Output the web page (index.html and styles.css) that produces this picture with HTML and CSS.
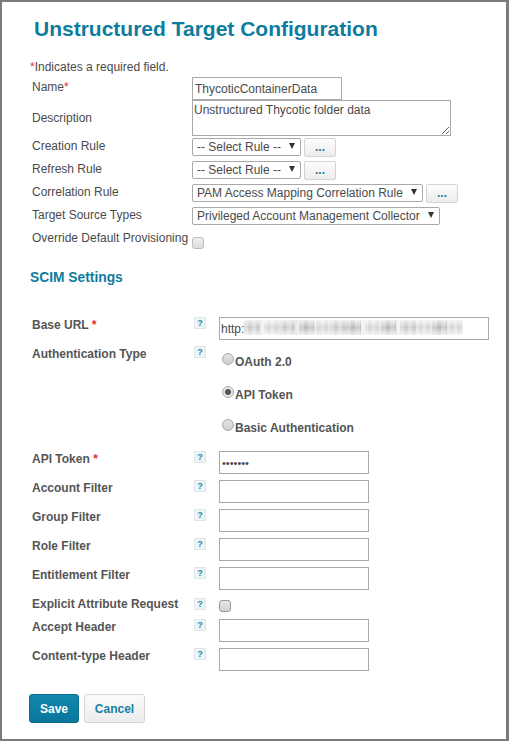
FILE: index.html
```html
<!DOCTYPE html>
<html lang="en">
<head>
  <meta charset="UTF-8" />
  <title>Unstructured Target Configuration</title>
  <link rel="stylesheet" href="styles.css">
</head>
<body>
  <div class="frame">
    <h1>Unstructured Target Configuration</h1>
    <p class="note"><span class="req">*</span>Indicates a required field.</p>

    <div class="row name-row">
      <label class="lbl" for="name">Name<span class="req">*</span></label>
      <input class="text name-input" id="name" type="text" value="ThycoticContainerData" />
    </div>
    <div class="row desc-row">
      <label class="lbl" for="desc">Description</label>
      <textarea class="desc" id="desc">Unstructured Thycotic folder data</textarea>
    </div>
    <div class="row">
      <label class="lbl">Creation Rule</label>
      <span class="select-box w-rule"><select><option>-- Select Rule --</option></select></span>
      <button class="more">...</button>
    </div>
    <div class="row">
      <label class="lbl">Refresh Rule</label>
      <span class="select-box w-rule"><select><option>-- Select Rule --</option></select></span>
      <button class="more">...</button>
    </div>
    <div class="row">
      <label class="lbl">Correlation Rule</label>
      <span class="select-box w-corr"><select><option>PAM Access Mapping Correlation Rule</option></select></span>
      <button class="more more-wide">...</button>
    </div>
    <div class="row">
      <label class="lbl">Target Source Types</label>
      <span class="select-box w-type"><select><option>Privileged Account Management Collector</option></select></span>
    </div>
    <div class="row">
      <label class="lbl">Override Default Provisioning</label>
      <input class="check check-top" type="checkbox" disabled />
    </div>

    <h2>SCIM Settings</h2>

    <div class="scim">
      <div class="s-row">
        <label class="s-lbl">Base URL <span class="req">*</span></label>
        <span class="help">?</span>
        <div class="url-wrap">
          <input class="text url" type="text" value="http:" />
          <div class="smudge">
            <i class="s1"></i><i class="gap"></i><i class="s2"></i><i class="s1"></i><i class="gap"></i><i class="s3"></i><i class="s2"></i><i class="s1"></i><i class="s3"></i><i class="gap"></i><i class="s2"></i><i class="s3"></i><i class="gap"></i><i class="s1"></i><i class="s2"></i><i class="s3"></i><i class="s2"></i>
          </div>
        </div>
      </div>
      <div class="s-row auth-row">
        <label class="s-lbl">Authentication Type</label>
        <span class="help">?</span>
        <div class="radios">
          <label class="radio"><input type="radio" name="auth" />OAuth 2.0</label>
          <label class="radio"><input type="radio" name="auth" checked />API Token</label>
          <label class="radio"><input type="radio" name="auth" />Basic Authentication</label>
        </div>
      </div>
      <div class="s-row">
        <label class="s-lbl">API Token <span class="req">*</span></label>
        <span class="help">?</span>
        <input class="text field token" type="password" value="1234567" />
      </div>
      <div class="s-row">
        <label class="s-lbl">Account Filter</label>
        <span class="help">?</span>
        <input class="text field" type="text" />
      </div>
      <div class="s-row">
        <label class="s-lbl">Group Filter</label>
        <span class="help">?</span>
        <input class="text field" type="text" />
      </div>
      <div class="s-row">
        <label class="s-lbl">Role Filter</label>
        <span class="help">?</span>
        <input class="text field" type="text" />
      </div>
      <div class="s-row">
        <label class="s-lbl">Entitlement Filter</label>
        <span class="help">?</span>
        <input class="text field" type="text" />
      </div>
      <div class="s-row explicit-row">
        <label class="s-lbl">Explicit Attribute Request</label>
        <span class="help help-low">?</span>
        <input class="check check-low" type="checkbox" />
      </div>
      <div class="s-row">
        <label class="s-lbl">Accept Header</label>
        <span class="help">?</span>
        <input class="text field" type="text" />
      </div>
      <div class="s-row">
        <label class="s-lbl">Content-type Header</label>
        <span class="help">?</span>
        <input class="text field" type="text" />
      </div>
    </div>

    <div class="actions">
      <button class="btn save">Save</button>
      <button class="btn cancel">Cancel</button>
    </div>
  </div>
</body>
</html>
```

FILE: styles.css
```css
html, body { margin: 0; padding: 0; background: #fff; }
body {
  font-family: "Liberation Sans", Arial, sans-serif;
  font-size: 12px;
  color: #4a4a4a;
}
.frame {
  box-sizing: border-box;
  width: 509px;
  height: 741px;
  border: solid #7b7b7b;
  border-width: 2px 3px 2px 2px;
  background: #fff;
  overflow: hidden;
}
h1 {
  margin: 15px 0 0 32px;
  font-size: 21px;
  line-height: 24px;
  font-weight: bold;
  color: #0d7c9e;
}
.note {
  margin: 19px 0 0 28px;
  line-height: 14px;
}
.req { color: #d33; }

.row {
  display: flex;
  align-items: flex-start;
  height: 23px;
  margin-left: 30px;
}
.name-row { margin-top: 3px; }
.desc-row { height: 38px; }
.lbl {
  width: 160px;
  flex: none;
  line-height: 16px;
}
.name-row .lbl { line-height: 20px; }
.desc-row .lbl { line-height: 36px; }

.text {
  box-sizing: border-box;
  height: 23px;
  margin: 0;
  padding: 1px 2px;
  border: 1px solid #a9a9a9;
  border-radius: 0;
  background: #fff;
  font: 12px "Liberation Sans", Arial, sans-serif;
  color: #4a4a4a;
  outline: none;
}
.name-input { width: 150px; }
.desc {
  box-sizing: border-box;
  width: 259px;
  height: 36px;
  margin: 0;
  padding: 2px 1px 0;
  border: 1px solid #a9a9a9;
  border-radius: 0;
  font: 12px "Liberation Sans", Arial, sans-serif;
  color: #4a4a4a;
  line-height: 14px;
}
.select-box {
  position: relative;
  display: block;
  flex: none;
  height: 18px;
}
.select-box select {
  appearance: none;
  box-sizing: border-box;
  display: block;
  width: 100%;
  height: 100%;
  margin: 0;
  padding: 0 0 0 4px;
  border: 1px solid #a9a9a9;
  border-radius: 2px;
  background: #fff;
  font: 12px "Liberation Sans", Arial, sans-serif;
  color: #4a4a4a;
}
.select-box::after {
  content: "";
  position: absolute;
  right: 6px;
  top: 5px;
  border-style: solid;
  border-width: 6px 3px 0;
  border-color: #333 transparent transparent;
}
.w-rule { width: 109px; }
.w-corr { width: 231px; }
.w-type { width: 248px; }
.more {
  box-sizing: border-box;
  width: 32px;
  height: 19px;
  margin: 0 0 0 3px;
  padding: 0 0 2px;
  border: 1px solid #d4d4d4;
  border-radius: 2px;
  background: linear-gradient(#fdfdfd, #ececec);
  color: #1b7fa3;
  font: bold 12px "Liberation Sans", Arial, sans-serif;
}
.more-wide { margin-left: 3px; }

.check {
  appearance: none;
  box-sizing: border-box;
  width: 12px;
  height: 12px;
  margin: 0;
  border: 1px solid #bbb;
  border-radius: 3px;
  background: linear-gradient(#f0f0f0, #dcdcdc);
}
.check-top { margin-top: 7px; }
.check-low { margin-top: 4px; border-color: #999; background: linear-gradient(#e6e6e6, #d2d2d2); }

h2 {
  margin: 17px 0 0 28px;
  font-size: 13.8px;
  line-height: 16px;
  font-weight: bold;
  color: #0d7c9e;
}

.scim { margin: 31px 0 0 30px; }
.s-row {
  display: grid;
  grid-template-columns: 162px 25px 1fr;
  align-items: start;
  min-height: 23px;
  margin-bottom: 6px;
}
.explicit-row { margin-bottom: 0; }
.s-lbl {
  font-weight: bold;
  line-height: 17px;
  color: #555;
}
.help {
  box-sizing: border-box;
  width: 12px;
  height: 12px;
  border: 1px solid #dfe6e8;
  background: #eef5f7;
  color: #1b86ab;
  font-size: 9px;
  font-weight: bold;
  line-height: 10px;
  text-align: center;
}
.help-low { margin-top: 2px; }
.field { width: 150px; }
.token { font-size: 11px; }
.url-wrap { position: relative; width: 270px; }
.url { display: block; width: 270px; padding-left: 1px; }
.smudge {
  position: absolute;
  left: 25px;
  top: 3px;
  width: 219px;
  height: 15px;
  display: flex;
  background: repeating-linear-gradient(90deg, #f4f4f4 0 4px, #ececec 4px 9px);
}
.smudge i { display: block; flex: 1 1 auto; }
.smudge .gap { flex: 0 0 4px; background: transparent; }
.smudge .s1 { background: repeating-linear-gradient(90deg, rgba(255,255,255,.3) 0 4px, transparent 4px 8px), linear-gradient(#efefef, #c8c8c8 50%, #efefef); }
.smudge .s2 { background: repeating-linear-gradient(90deg, rgba(255,255,255,.3) 0 3px, transparent 3px 7px), linear-gradient(#f2f2f2, #d6d6d6 50%, #f2f2f2); }
.smudge .s3 { background: repeating-linear-gradient(90deg, rgba(255,255,255,.3) 0 5px, transparent 5px 9px), linear-gradient(#ececec, #b8b8b8 50%, #ececec); }

.auth-row { height: 99px; }
.radios { margin: -10px 0 0 3px; }
.radio {
  display: flex;
  align-items: flex-end;
  height: 33px;
  font-weight: bold;
  line-height: 14px;
  color: #555;
  box-sizing: border-box;
  padding-top: 6px;
}
.radio input {
  appearance: none;
  box-sizing: border-box;
  width: 12px;
  height: 12px;
  margin: 0 1px 4px 0;
  border: 1px solid #aaa;
  border-radius: 50%;
  background: linear-gradient(#e4e4e4, #cfcfcf);
}
.radio input:checked {
  background: radial-gradient(circle, #555 0 2.5px, #e8e8e8 3.5px);
}

.actions {
  display: flex;
  gap: 5px;
  margin: 23px 0 0 27px;
}
.btn {
  box-sizing: border-box;
  height: 29px;
  margin: 0;
  padding: 0;
  border-radius: 3px;
  font: bold 12px "Liberation Sans", Arial, sans-serif;
}
.save {
  width: 50px;
  border: 1px solid #0b6f90;
  background: linear-gradient(#1187ae, #0a769a);
  color: #fff;
}
.cancel {
  width: 61px;
  border: 1px solid #d4d4d4;
  background: linear-gradient(#fbfbfb, #ececec);
  color: #1b7fa3;
}
```
